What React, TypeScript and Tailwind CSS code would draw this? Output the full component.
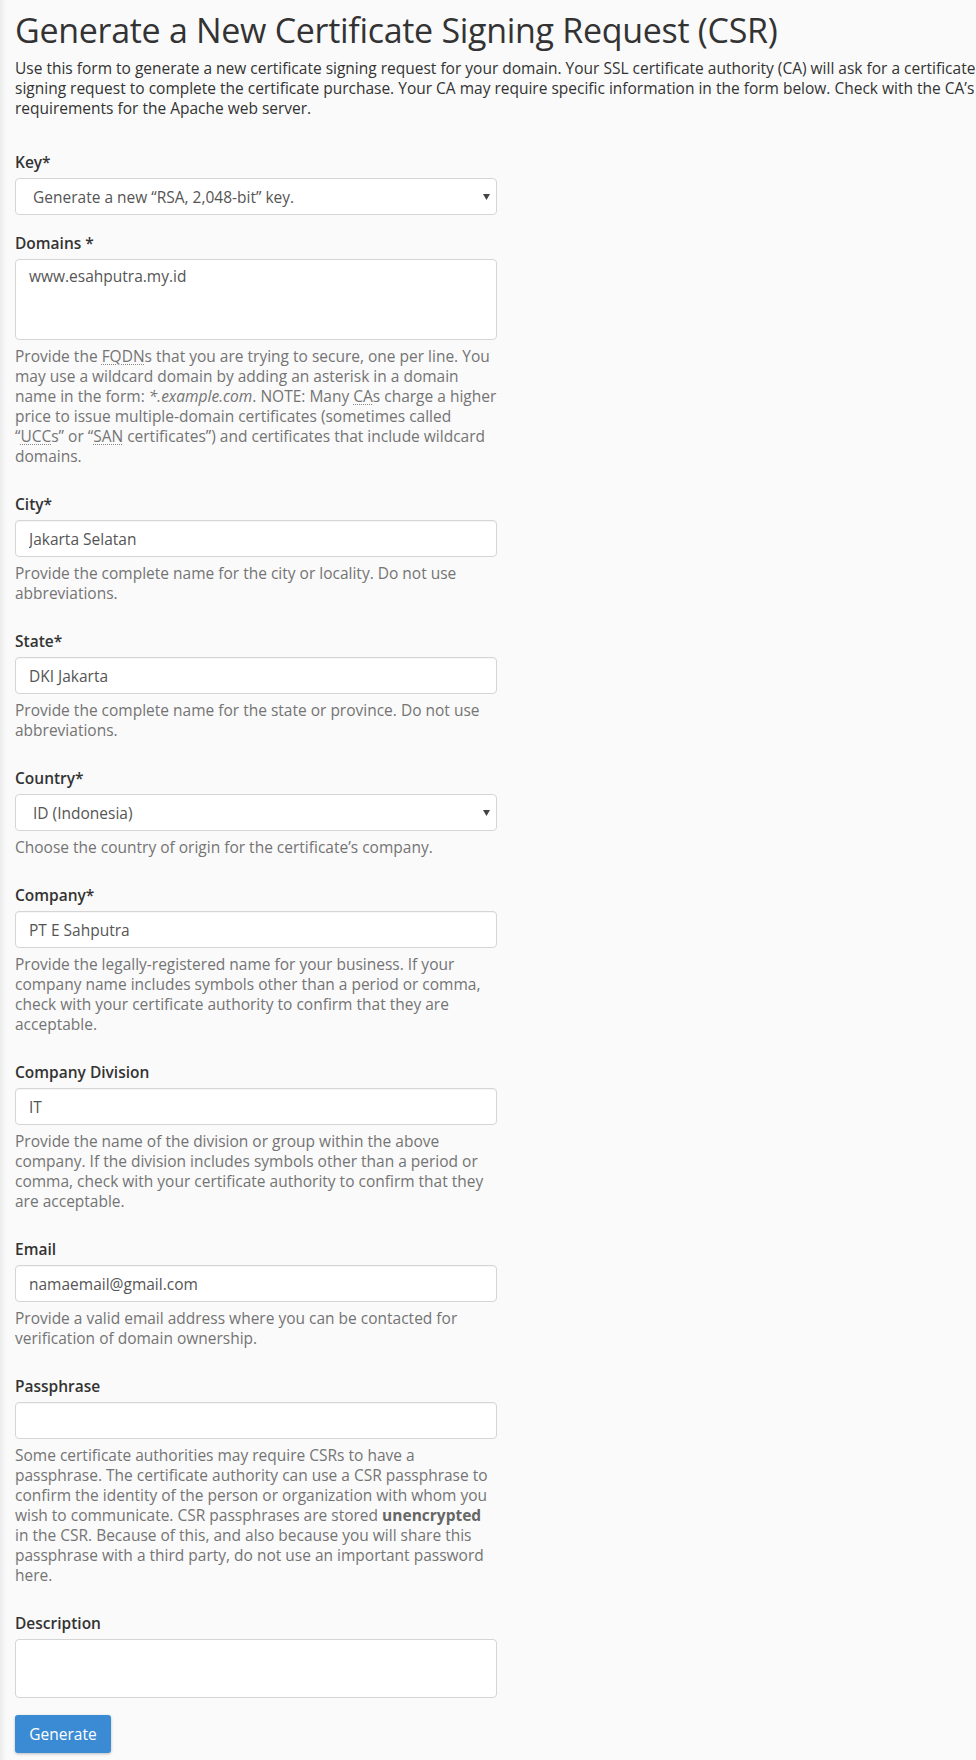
import React from "react";

const font = { fontFamily: '"Open Sans", "Liberation Sans", sans-serif' };

function Abbr({ children }: { children: React.ReactNode }) {
  return (
    <abbr className="underline decoration-dotted decoration-[#888] decoration-1 underline-offset-[2px]">
      {children}
    </abbr>
  );
}

function Label({ children }: { children: React.ReactNode }) {
  return <label className="block h-5 leading-5 mb-[6px] font-semibold text-[#333]">{children}</label>;
}

function Help({ children }: { children: React.ReactNode }) {
  return <p className="pt-[6px] pb-[10px] leading-5 text-[#747474]">{children}</p>;
}

function TextInput({ value }: { value: string }) {
  return (
    <input
      readOnly
      value={value}
      className="block w-full h-[37px] px-[13px] bg-white border border-[#d5d5d5] rounded-[4px] text-[15.5px] text-[#555] outline-none shadow-[inset_0_1px_1px_rgba(0,0,0,0.04)]"
      style={font}
    />
  );
}

function Select({ value }: { value: string }) {
  return (
    <div className="relative w-full h-[37px] bg-white border border-[#d5d5d5] rounded-[4px] flex items-center pl-[17px] text-[#555]">
      <span>{value}</span>
      <svg className="absolute right-[6px] top-[15px]" width="7" height="6" viewBox="0 0 7 6">
        <path d="M0 0 L7 0 L3.5 6 Z" fill="#444" />
      </svg>
    </div>
  );
}

function TextArea({ value, h }: { value: string; h: string }) {
  return (
    <textarea
      readOnly
      value={value}
      className={`block w-full ${h} px-[13px] py-[6px] bg-white border border-[#d5d5d5] rounded-[4px] text-[15.5px] text-[#555] outline-none resize-none leading-5`}
      style={font}
    />
  );
}

function Group({ children, mb = "mb-[18px]" }: { children: React.ReactNode; mb?: string }) {
  return <div className={`flex flex-col ${mb}`}>{children}</div>;
}

export default function App() {
  return (
    <div
      className="w-[976px] min-h-[1760px] overflow-hidden bg-[#fafafa] text-[15.5px] leading-5 text-[#333] shadow-[inset_7px_0_6px_-5px_rgba(0,0,0,0.08)]"
      style={font}
    >
      <div className="pl-[15px] pt-[10px]">
        <h1 className="text-[34px] leading-[40px] tracking-[-0.3px] font-normal text-[#333] whitespace-nowrap">
          Generate a New Certificate Signing Request (CSR)
        </h1>
        <p className="w-[990px] mt-[8px] leading-5 text-[#333]">
          Use this form to generate a new certificate signing request for your domain. Your SSL certificate authority
          (CA) will ask for a certificate signing request to complete the certificate purchase. Your CA may require
          specific information in the form below. Check with the CA’s requirements for the Apache web server.
        </p>

        <form className="w-[482px] mt-[34px] flex flex-col" onSubmit={(e) => e.preventDefault()}>
          <Group>
            <Label>Key*</Label>
            <Select value="Generate a new “RSA, 2,048-bit” key." />
          </Group>

          <Group>
            <Label>Domains *</Label>
            <TextArea value="www.esahputra.my.id" h="h-[81px]" />
            <Help>
              Provide the <Abbr>FQDN</Abbr>s that you are trying to secure, one per line. You may use a wildcard domain
              by adding an asterisk in a domain name in the form: <em>*.example.com</em>. NOTE: Many <Abbr>CA</Abbr>s
              charge a higher price to issue multiple-domain certificates (sometimes called “<Abbr>UCC</Abbr>s” or “
              <Abbr>SAN</Abbr> certificates”) and certificates that include wildcard domains.
            </Help>
          </Group>

          <Group>
            <Label>City*</Label>
            <TextInput value="Jakarta Selatan" />
            <Help>Provide the complete name for the city or locality. Do not use abbreviations.</Help>
          </Group>

          <Group>
            <Label>State*</Label>
            <TextInput value="DKI Jakarta" />
            <Help>Provide the complete name for the state or province. Do not use abbreviations.</Help>
          </Group>

          <Group>
            <Label>Country*</Label>
            <Select value="ID (Indonesia)" />
            <Help>Choose the country of origin for the certificate’s company.</Help>
          </Group>

          <Group>
            <Label>Company*</Label>
            <TextInput value="PT E Sahputra" />
            <Help>
              Provide the legally-registered name for your business. If your company name includes symbols other than a
              period or comma, check with your certificate authority to confirm that they are acceptable.
            </Help>
          </Group>

          <Group>
            <Label>Company Division</Label>
            <TextInput value="IT" />
            <Help>
              Provide the name of the division or group within the above company. If the division includes symbols
              other than a period or comma, check with your certificate authority to confirm that they are acceptable.
            </Help>
          </Group>

          <Group>
            <Label>Email</Label>
            <TextInput value="namaemail@gmail.com" />
            <Help>Provide a valid email address where you can be contacted for verification of domain ownership.</Help>
          </Group>

          <Group>
            <Label>Passphrase</Label>
            <TextInput value="" />
            <Help>
              Some certificate authorities may require CSRs to have a passphrase. The certificate authority can use a
              CSR passphrase to confirm the identity of the person or organization with whom you wish to communicate.
              CSR passphrases are stored <strong className="font-bold text-[#666]">unencrypted</strong> in the CSR.
              Because of this, and also because you will share this passphrase with a third party, do not use an
              important password here.
            </Help>
          </Group>

          <Group mb="mb-[17px]">
            <Label>Description</Label>
            <TextArea value="" h="h-[59px]" />
          </Group>

          <div>
            <button
              type="submit"
              className="h-[38px] w-[96px] rounded-[3px] bg-[#3a8bd3] text-white text-[15.5px] shadow-[0_1px_3px_rgba(0,0,0,0.25)]"
              style={font}
            >
              Generate
            </button>
          </div>
        </form>
      </div>
    </div>
  );
}
